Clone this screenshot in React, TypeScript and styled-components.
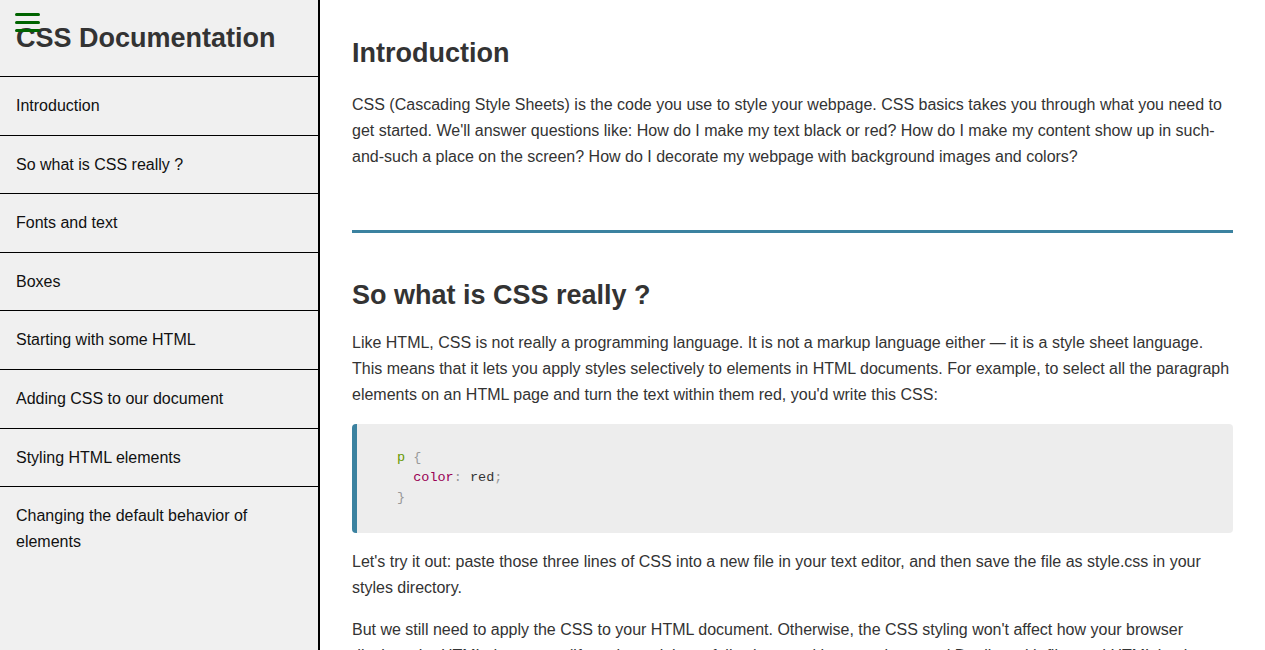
import React from "react";
import styled, { createGlobalStyle } from "styled-components";

const GlobalStyle = createGlobalStyle`
  html, body { margin: 0; padding: 0; }
  body { font-family: "Liberation Sans", Arial, sans-serif; background: #fff; }
`;

const Page = styled.div`
  display: flex;
  height: 100vh;
  overflow: hidden;
`;

const Sidebar = styled.nav`
  position: relative;
  width: 318px;
  flex: 0 0 318px;
  background: #f0f0f0;
  border-right: 2px solid #000;
  display: flex;
  flex-direction: column;
`;

const Menu = styled.button`
  position: absolute;
  top: 13px;
  left: 15px;
  width: 25px;
  padding: 0;
  border: 0;
  background: transparent;
  display: flex;
  flex-direction: column;
  gap: 5px;
`;

const Bar = styled.span`
  display: block;
  height: 3px;
  border-radius: 2px;
  background: #006400;
`;

const Title = styled.header`
  height: 76px;
  display: flex;
  align-items: center;
  padding: 0 16px;
  border-bottom: 1px solid #000;
  font-size: 27px;
  font-weight: bold;
  color: #333;
`;

const NavList = styled.ul`
  list-style: none;
  margin: 0;
  padding: 0;
`;

const NavItem = styled.li`
  padding: 16px;
  font-size: 16px;
  line-height: 1.6;
  color: #111;
  border-bottom: 1px solid #000;

  &:last-child {
    border-bottom: 0;
  }
`;

const Main = styled.main`
  flex: 1;
  padding: 0 32px;
  color: #333;
`;

const Heading = styled.h2<{ $top: number; $bottom: number }>`
  margin: ${(p) => p.$top}px 0 ${(p) => p.$bottom}px;
  font-size: 27px;
  line-height: 34px;
  font-weight: bold;
  color: #333;
`;

const Para = styled.p`
  margin: 0 0 16px;
  font-size: 16px;
  line-height: 26px;
`;

const Rule = styled.hr`
  margin: 60px 0 0;
  border: 0;
  height: 3px;
  background: #3b82a0;
`;

const CodeBlock = styled.pre`
  margin: 0 0 16px;
  padding: 24px 40px 25px;
  background: #ededed;
  border-left: 5px solid #3b82a0;
  border-radius: 4px;
  font-family: "Liberation Mono", "Courier New", monospace;
  font-size: 13.5px;
  line-height: 20px;
  color: #333;
`;

const Tok = styled.span<{ $c: string }>`
  color: ${(p) => p.$c};
`;

const navItems = [
  "Introduction",
  "So what is CSS really ?",
  "Fonts and text",
  "Boxes",
  "Starting with some HTML",
  "Adding CSS to our document",
  "Styling HTML elements",
  "Changing the default behavior of elements",
];

export default function App() {
  return (
    <>
      <GlobalStyle />
      <Page>
        <Sidebar>
          <Title>CSS Documentation</Title>
          <Menu aria-label="menu">
            <Bar />
            <Bar />
            <Bar />
          </Menu>
          <NavList>
            {navItems.map((t) => (
              <NavItem key={t}>{t}</NavItem>
            ))}
          </NavList>
        </Sidebar>
        <Main>
          <Heading $top={36} $bottom={22}>Introduction</Heading>
          <Para>
            CSS (Cascading Style Sheets) is the code you use to style your webpage. CSS basics takes you through what you need to get started. We'll answer questions like: How do I make my text black or red? How do I make my content show up in such-and-such a place on the screen? How do I decorate my webpage with background images and colors?
          </Para>
          <Rule />
          <Heading $top={45} $bottom={18}>So what is CSS really ?</Heading>
          <Para>
            Like HTML, CSS is not really a programming language. It is not a markup language either — it is a style sheet language. This means that it lets you apply styles selectively to elements in HTML documents. For example, to select all the paragraph elements on an HTML page and turn the text within them red, you'd write this CSS:
          </Para>
          <CodeBlock>
            <Tok $c="#669900">p</Tok> <Tok $c="#999">{"{"}</Tok>
            {"\n  "}
            <Tok $c="#990055">color</Tok>
            <Tok $c="#999">:</Tok> red<Tok $c="#999">;</Tok>
            {"\n"}
            <Tok $c="#999">{"}"}</Tok>
          </CodeBlock>
          <Para>
            Let's try it out: paste those three lines of CSS into a new file in your text editor, and then save the file as style.css in your styles directory.
          </Para>
          <Para>
            But we still need to apply the CSS to your HTML document. Otherwise, the CSS styling won't affect how your browser displays the HTML document. (If you haven't been following on with our project, read Dealing with files and HTML basics to find out what you need to do first.)
          </Para>
        </Main>
      </Page>
    </>
  );
}
